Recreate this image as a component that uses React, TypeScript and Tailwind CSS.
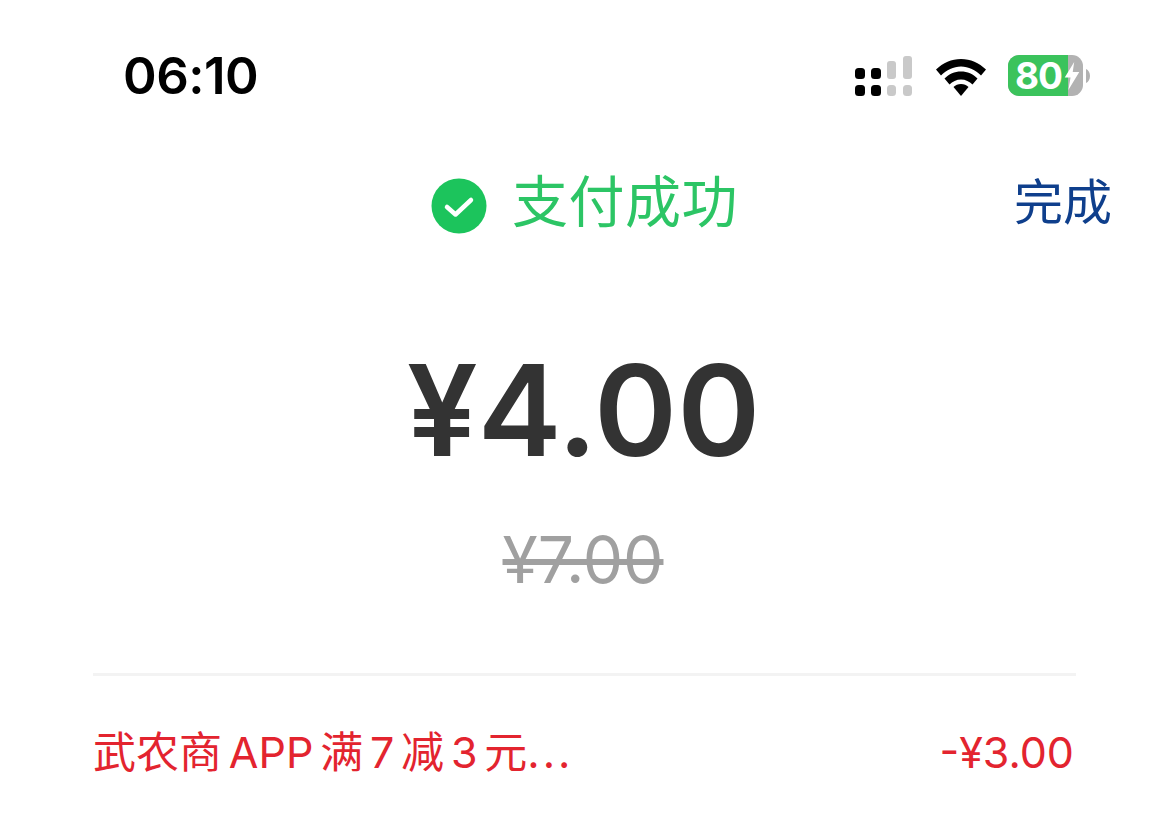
import React from "react";

const CJK = "font-['Inter','Noto_Sans_CJK_SC',sans-serif]";

const StatusIcons = () => (
  <div className="flex items-center">
    <svg width="30" height="42" viewBox="0 0 30 42">
      <rect x="0" y="12" width="10" height="11" rx="3.500" fill="#000" />
      <rect x="16" y="12" width="10" height="11" rx="3.500" fill="#000" />
      <rect x="0" y="29" width="10" height="11" rx="3.500" fill="#000" />
      <rect x="16" y="29" width="10" height="11" rx="3.500" fill="#000" />
    </svg>
    <svg width="30" height="42" viewBox="0 0 30 42">
      <rect x="2" y="5" width="9" height="18" rx="3" fill="#c9c9c9" />
      <rect x="18" y="0" width="9" height="23" rx="3" fill="#c9c9c9" />
      <rect x="2" y="29" width="9" height="11" rx="3.500" fill="#c9c9c9" />
      <rect x="18" y="29" width="9" height="11" rx="3.500" fill="#c9c9c9" />
    </svg>
    <svg width="50" height="40" viewBox="0 0 50 40" className="ml-[21px]">
      <path d="M25 2C15.500 2 7 6 0 12.500l5 6C10.500 13 17.500 9.500 25 9.500S39.500 13 45 18.500l5-6C43 6 34.500 2 25 2Z" fill="#000" />
      <path d="M25 14.500c-6.500 0-12 2.500-16.500 7l5 6c3-3 7-5 11.500-5s8.500 2 11.500 5l5-6c-4.500-4.500-10-7-16.500-7Z" fill="#000" />
      <path d="M25 27c-3 0-5.500 1-7.500 3L25 39l7.500-9c-2-2-4.500-3-7.500-3Z" fill="#000" />
    </svg>
    <div className="relative mb-[2px] ml-[22px] flex h-[41px] w-[75px] rounded-[11px] bg-[#b2b2b2]">
      <div className="h-full w-[60px] rounded-l-[11px] bg-[#3bc35c]" />
      <span className="absolute left-[7px] top-0 font-['Inter',sans-serif] text-[37px] leading-[41px] font-bold tracking-[-1px] text-white">
        80
      </span>
      <svg width="16" height="28" viewBox="0 0 22 36" preserveAspectRatio="none" className="absolute left-[56px] top-[7px]">
        <path d="M14 0 1 20h8L6 36 21 13h-9l2-13Z" fill="#fff" />
      </svg>
    </div>
    <svg width="4" height="14" viewBox="0 0 4 14" className="mb-[2px] ml-[3px]">
      <path d="M0 0c2.500 1 4 4 4 7s-1.500 6-4 7V0Z" fill="#b2b2b2" />
    </svg>
  </div>
);

export default function App() {
  return (
    <div className={`flex h-[837px] w-[1169px] flex-col overflow-hidden bg-white ${CJK}`}>
      {/* status bar */}
      <div className="flex h-[106px] items-end justify-between pr-[79px] pl-[123px]">
        <span className="font-['Inter',sans-serif] text-[51px] leading-[60px] font-semibold tracking-[-0.5px] text-black">
          06:10
        </span>
        <div className="mb-[8px]">
          <StatusIcons />
        </div>
      </div>

      {/* header */}
      <div className="mt-[59px] flex h-[80px] items-center pr-[57px] pl-[431px]">
        <svg width="56" height="56" viewBox="0 0 56 56" className="mt-[2px]">
          <circle cx="28" cy="28" r="27.500" fill="#1cc45c" />
          <path d="M16 29 24.500 36.500 40 22" fill="none" stroke="#fff" strokeWidth="4.500" strokeLinecap="round" strokeLinejoin="round" />
        </svg>
        <span className="mb-[6px] ml-[25px] text-[56px] leading-[80px] tracking-[0.5px] text-[#2cc565]">支付成功</span>
        <span className="mb-[4px] ml-auto text-[49px] leading-[80px] text-[#0f3f8c]">完成</span>
      </div>

      {/* amount */}
      <div className="mt-[90px] flex justify-center pr-[2px]">
        <span className="font-['Inter',sans-serif] text-[126px] leading-[150px] font-[560] text-[#333333]">¥4.00</span>
      </div>
      <div className="mt-[40px] flex justify-center pr-[3px]">
        <span className="font-['Inter',sans-serif] text-[64px] leading-[70px] text-[#a0a0a0] line-through">¥7.00</span>
      </div>

      {/* discount row */}
      <div className="mx-[93px] mt-[78px] border-t-[3px] border-[#f3f3f3]">
        <div className="mt-[46px] flex items-center justify-between text-[43px] leading-[60px] text-[#e3242f]">
          <span className="[word-spacing:-5.300px]">
            武农商 APP 满 7 减 3 元<span className="tracking-[3px]">...</span>
          </span>
          <span className="mr-[2px] font-['Inter',sans-serif]">-¥3.00</span>
        </div>
      </div>
    </div>
  );
}
